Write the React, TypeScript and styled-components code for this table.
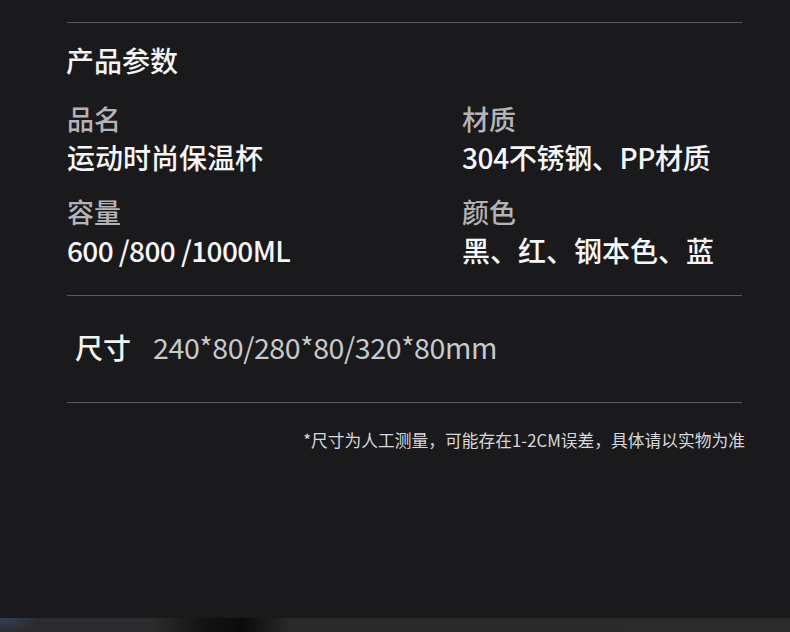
import React from 'react';
import styled, { createGlobalStyle } from 'styled-components';

const GlobalStyle = createGlobalStyle`
	html, body {
		margin: 0;
		padding: 0;
		background: #1a1a1d;
	}
	body {
		font-family: "Noto Sans CJK SC", "Noto Sans", sans-serif;
	}
`;

const Page = styled.div`
	width: 790px;
	height: 632px;
	overflow: hidden;
	display: flex;
	flex-direction: column;
	background: #1a1a1d;
`;

const Content = styled.div`
	padding: 0 48px 0 67px;
	display: flex;
	flex-direction: column;
`;

const Divider = styled.div<{ $top: number }>`
	height: 1px;
	margin-top: ${({ $top }) => $top}px;
	background: #5c5c60;
`;

const Title = styled.h2`
	margin: 23px 0 0 -1px;
	font-size: 28px;
	line-height: 28px;
	font-weight: 500;
	color: #f4f4f4;
`;

const SpecGrid = styled.div`
	margin-top: 31px;
	display: grid;
	grid-template-columns: 395px 1fr;
	row-gap: 27px;
`;

const SpecCell = styled.div`
	display: flex;
	flex-direction: column;
	gap: 10px;
`;

const SpecLabel = styled.div`
	font-size: 27px;
	line-height: 28px;
	font-weight: 500;
	color: #b4b4b6;
`;

const SpecValue = styled.div<{ $tracking: number }>`
	font-size: 28px;
	line-height: 28px;
	font-weight: 500;
	letter-spacing: ${({ $tracking }) => $tracking}px;
	color: #f6f6f6;
`;

const SizeRow = styled.div`
	margin-top: 37px;
	padding-left: 8px;
	display: flex;
	align-items: baseline;
	gap: 22px;
`;

const SizeLabel = styled.span`
	font-size: 28px;
	line-height: 28px;
	font-weight: 500;
	color: #f4f4f4;
`;

const SizeValue = styled.span`
	font-size: 28.5px;
	line-height: 28px;
	letter-spacing: -0.38px;
	color: #c9c9cb;
`;

const Note = styled.p`
	margin: 28px -3px 0 0;
	font-size: 16.75px;
	line-height: 18px;
	text-align: right;
	color: #d8d8da;
`;

const BottomStrip = styled.div`
	margin-top: auto;
	height: 14px;
	background:
		radial-gradient(ellipse 40px 14px at 0 0, #34405a 0%, transparent 100%),
		linear-gradient(90deg, #2c2c2e 0px, #2c2c2e 150px, #151515 200px, #0a0a0a 240px, #2a2a2b 290px, #2b2b2c 100%);
`;

const specs = [
	{ label: '品名', value: '运动时尚保温杯', tracking: 0 },
	{ label: '材质', value: '304不锈钢、PP材质', tracking: -0.35 },
	{ label: '容量', value: '600 /800 /1000ML', tracking: -0.6 },
	{ label: '颜色', value: '黑、红、钢本色、蓝', tracking: 0 },
];

export default function App() {
	return (
		<Page>
			<GlobalStyle />
			<Content>
				<Divider $top={22} />
				<Title>产品参数</Title>
				<SpecGrid>
					{specs.map((s) => (
						<SpecCell key={s.label}>
							<SpecLabel>{s.label}</SpecLabel>
							<SpecValue $tracking={s.tracking}>{s.value}</SpecValue>
						</SpecCell>
					))}
				</SpecGrid>
				<Divider $top={31} />
				<SizeRow>
					<SizeLabel>尺寸</SizeLabel>
					<SizeValue>240*80/280*80/320*80mm</SizeValue>
				</SizeRow>
				<Divider $top={41} />
				<Note>*尺寸为人工测量，可能存在1-2CM误差，具体请以实物为准</Note>
			</Content>
			<BottomStrip />
		</Page>
	);
}
